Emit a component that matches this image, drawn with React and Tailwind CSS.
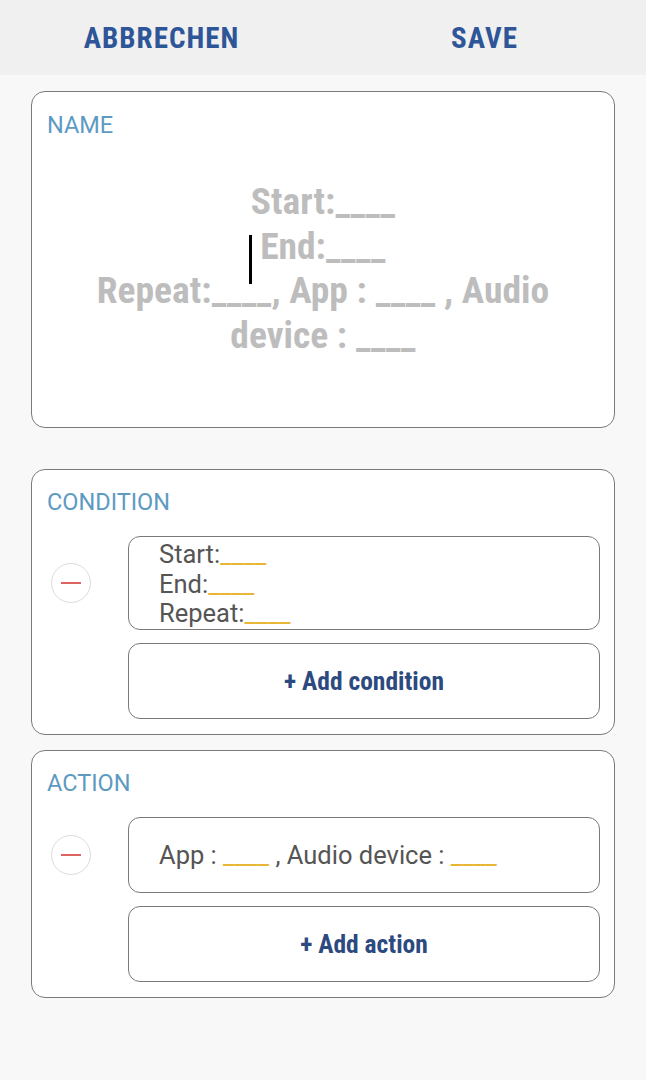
import React from "react";

const Blank = () => <span className="text-[#e8b634]">____</span>;

function Minus() {
  return (
    <div className="w-[40px] h-[40px] rounded-full border border-[#dcdcdc] bg-white flex items-center justify-center shrink-0">
      <div className="w-[20px] h-[2.5px] bg-[#dd6461]" />
    </div>
  );
}

export default function App() {
  const font = { fontFamily: "Roboto, 'Liberation Sans', sans-serif" };
  return (
    <div className="w-[646px] h-[1080px] bg-[#f8f8f8]" style={font}>
      <div className="h-[75px] bg-[#f0f0f0] flex pt-[3px]">
        <div className="w-1/2 flex items-center justify-center text-[29px] font-bold text-[#2d5597] font-stretch-condensed tracking-[1px]">
          ABBRECHEN
        </div>
        <div className="w-1/2 flex items-center justify-center text-[29px] font-bold text-[#2d5597] font-stretch-condensed tracking-[1px]">
          SAVE
        </div>
      </div>

      <div className="px-[31px]">
        <div className="mt-[16px] h-[337px] bg-white border border-[#7a7a7a] rounded-[14px] pt-[20px] px-[15px]">
          <div className="text-[23.5px] leading-[26px] text-[#5d9ac2]">NAME</div>
          <div className="mt-[41px] text-center text-[37.5px] leading-[44.5px] font-bold text-[#bdbdbd] font-stretch-condensed px-[40px]">
            Start:____
            <br />
            <span className="relative">
              <span className="absolute left-[-11px] top-[11px] w-[2.5px] h-[49px] bg-black" />
              End:____
            </span>
            <br />
            Repeat:____, App : ____ , Audio device : ____
          </div>
        </div>

        <div className="mt-[41px] h-[266px] bg-white border border-[#7a7a7a] rounded-[14px] pt-[19px] pr-[14px]">
          <div className="pl-[15px] text-[23.5px] leading-[26px] text-[#5d9ac2]">CONDITION</div>
          <div className="mt-[21px] flex items-center">
            <div className="w-[96px] pl-[19px]">
              <Minus />
            </div>
            <div className="flex-1 h-[94px] border border-[#7a7a7a] rounded-[12px] pl-[30px] pt-[3px] text-[25.5px] leading-[29.5px] text-[#555555] overflow-hidden">
              <div>Start:<Blank /></div>
              <div>End:<Blank /></div>
              <div>Repeat:<Blank /></div>
            </div>
          </div>
          <div className="mt-[13px] ml-[96px] h-[76px] border border-[#7a7a7a] rounded-[12px] flex items-center justify-center text-[25.5px] font-bold text-[#2c4a80] font-stretch-condensed">
            + Add condition
          </div>
        </div>

        <div className="mt-[15px] h-[248px] bg-white border border-[#7a7a7a] rounded-[14px] pt-[19px] pr-[14px]">
          <div className="pl-[15px] text-[23.5px] leading-[26px] text-[#5d9ac2]">ACTION</div>
          <div className="mt-[21px] flex items-center">
            <div className="w-[96px] pl-[19px]">
              <Minus />
            </div>
            <div className="flex-1 h-[76px] border border-[#7a7a7a] rounded-[12px] pl-[30px] flex items-center text-[25.5px] text-[#555555]">
              <span>App : <Blank /> , Audio device : <Blank /></span>
            </div>
          </div>
          <div className="mt-[13px] ml-[96px] h-[76px] border border-[#7a7a7a] rounded-[12px] flex items-center justify-center text-[25.5px] font-bold text-[#2c4a80] font-stretch-condensed">
            + Add action
          </div>
        </div>
      </div>
    </div>
  );
}
